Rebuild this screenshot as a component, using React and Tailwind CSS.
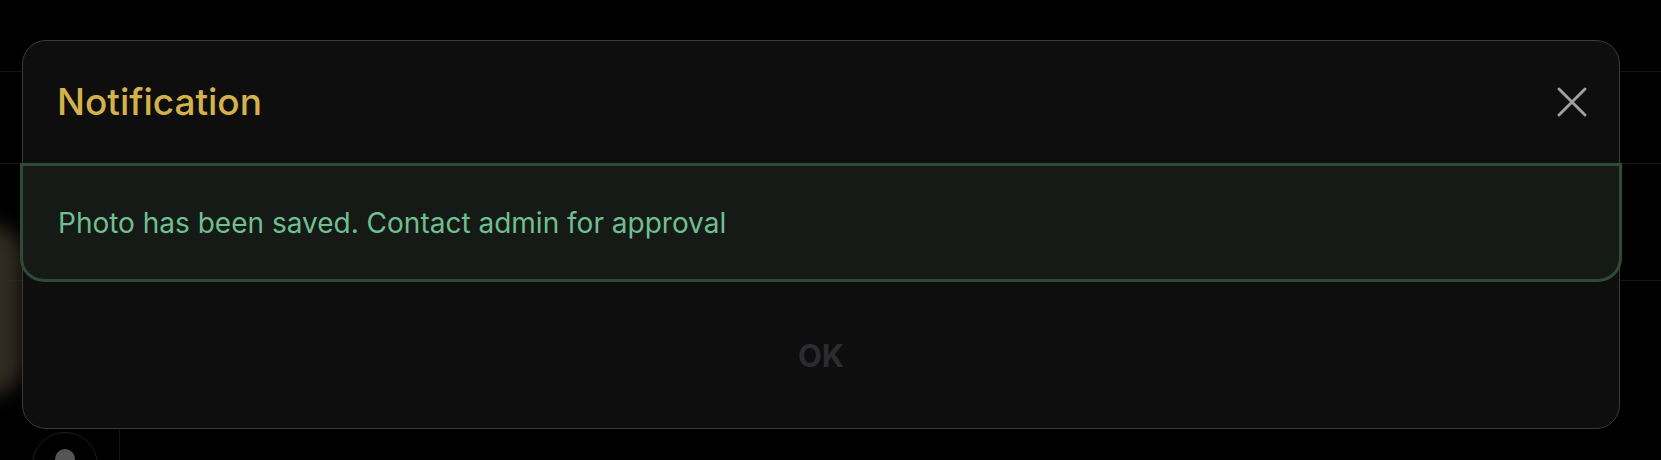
import React from "react";

function BackgroundPage() {
  return (
    <div className="w-full h-full flex flex-col bg-black">
      <div className="h-[72px] shrink-0 border-b border-[#141414]" />
      <div className="h-[92px] shrink-0 border-b border-[#151515]" />
      <div className="h-[117px] shrink-0 border-b border-[#151515] flex">
        <div className="w-[20px] h-full" />
      </div>
      <div className="flex-1 flex">
        <div className="w-[120px] shrink-0 border-r border-[#141414] flex flex-col justify-end items-start pl-[32px]">
          <div className="w-[66px] h-[66px] mb-[-38px] rounded-full border border-[#1c1c1c] flex justify-center pt-[16px]">
            <div className="w-[20px] h-[20px] rounded-full bg-[#555555]" />
          </div>
        </div>
      </div>
    </div>
  );
}

export default function App() {
  return (
    <div className="relative w-[1661px] h-[460px] overflow-hidden bg-black" style={{ fontFamily: "Inter, 'Noto Sans', sans-serif" }}>
      <BackgroundPage />
      {/* blurred photo edge behind the overlay */}
      <div className="absolute left-[-40px] top-[225px] w-[62px] h-[170px] rounded-full bg-[#332b22] blur-[10px]" />

      {/* modal overlay */}
      <div className="absolute inset-0 pl-[22px] pt-[40px] pr-[41px]">
        <div className="w-full h-[389px] rounded-[24px] border border-[#3a3a3a] bg-[#0e0e0e] flex flex-col">
          <div className="h-[122px] flex items-center justify-between pl-[34px] pr-[32px] shrink-0">
            <h1 className="text-[37px] font-medium text-[#d4b24b] leading-none mt-[-2px]">Notification</h1>
            <svg width="30" height="30" viewBox="0 0 30 30" fill="none" stroke="#a0a0a0" strokeWidth="2.9" strokeLinecap="round">
              <path d="M2 2 L28 28 M28 2 L2 28" />
            </svg>
          </div>
          <div className="mx-[-3px] h-[119px] shrink-0 flex items-center pl-[35px] bg-[#151a16] border-[3px] border-[#2e4a39] rounded-b-[24px]">
            <p className="text-[28px] text-[#6fbf90] leading-none">Photo has been saved. Contact admin for approval</p>
          </div>
          <div className="flex-1 flex items-center justify-center">
            <span className="text-[31px] font-bold text-[#2a2c30] leading-none">OK</span>
          </div>
        </div>
      </div>
    </div>
  );
}
